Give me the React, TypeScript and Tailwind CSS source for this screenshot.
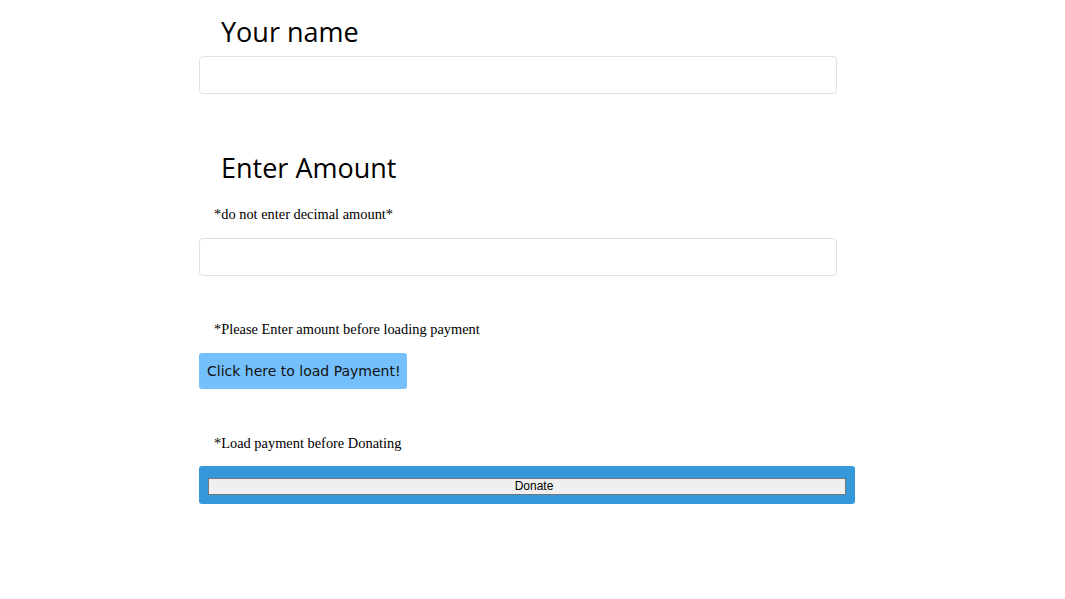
export default function App() {
  return (
    <main className="min-h-screen bg-white">
      <div className="ml-[199px] w-[656px] pt-[13px]">
        {/* NAME */}
        <h2 className="pl-[22px] font-['Open_Sans',sans-serif] text-[27px] leading-[38px] text-black">
          Your name
        </h2>
        <input
          type="text"
          className="mt-[5px] block h-[38px] w-[638px] rounded-[4px] border border-[#dee2e6] bg-white"
        />

        {/* AMOUNT */}
        <h2 className="mt-[55px] pl-[22px] font-['Open_Sans',sans-serif] text-[27px] leading-[38px] text-black">
          Enter Amount
        </h2>
        <p className="mt-[19px] pl-[15px] font-['Liberation_Serif',serif] text-[14.4px] leading-[16px] text-black">
          *do not enter decimal amount*
        </p>
        <input
          type="text"
          className="mt-[16px] block h-[38px] w-[638px] rounded-[4px] border border-[#dee2e6] bg-white"
        />

        {/* LOAD PAYMENT */}
        <p className="mt-[45px] pl-[15px] font-['Liberation_Serif',serif] text-[14.4px] leading-[16px] text-black">
          *Please Enter amount before loading payment
        </p>
        <button className="mt-[16px] block h-[36px] rounded-[3px] bg-[#74c0fc] pl-[8px] pr-[6px] font-['DejaVu_Sans',sans-serif] text-[14px] text-[#111]">
          Click here to load Payment!
        </button>

        {/* DONATE */}
        <p className="mt-[46px] pl-[15px] font-['Liberation_Serif',serif] text-[14.4px] leading-[16px] text-black">
          *Load payment before Donating
        </p>
        <div className="mt-[15px] flex h-[38px] w-[656px] items-center rounded-[3px] bg-[#3498db] px-[9px] pt-[2px]">
          <button className="h-[17px] w-full border border-[#767676] bg-[#efefef] pl-[14px] font-['Liberation_Sans',sans-serif] text-[12px] leading-[14px] text-black">
            Donate
          </button>
        </div>
      </div>
    </main>
  );
}
